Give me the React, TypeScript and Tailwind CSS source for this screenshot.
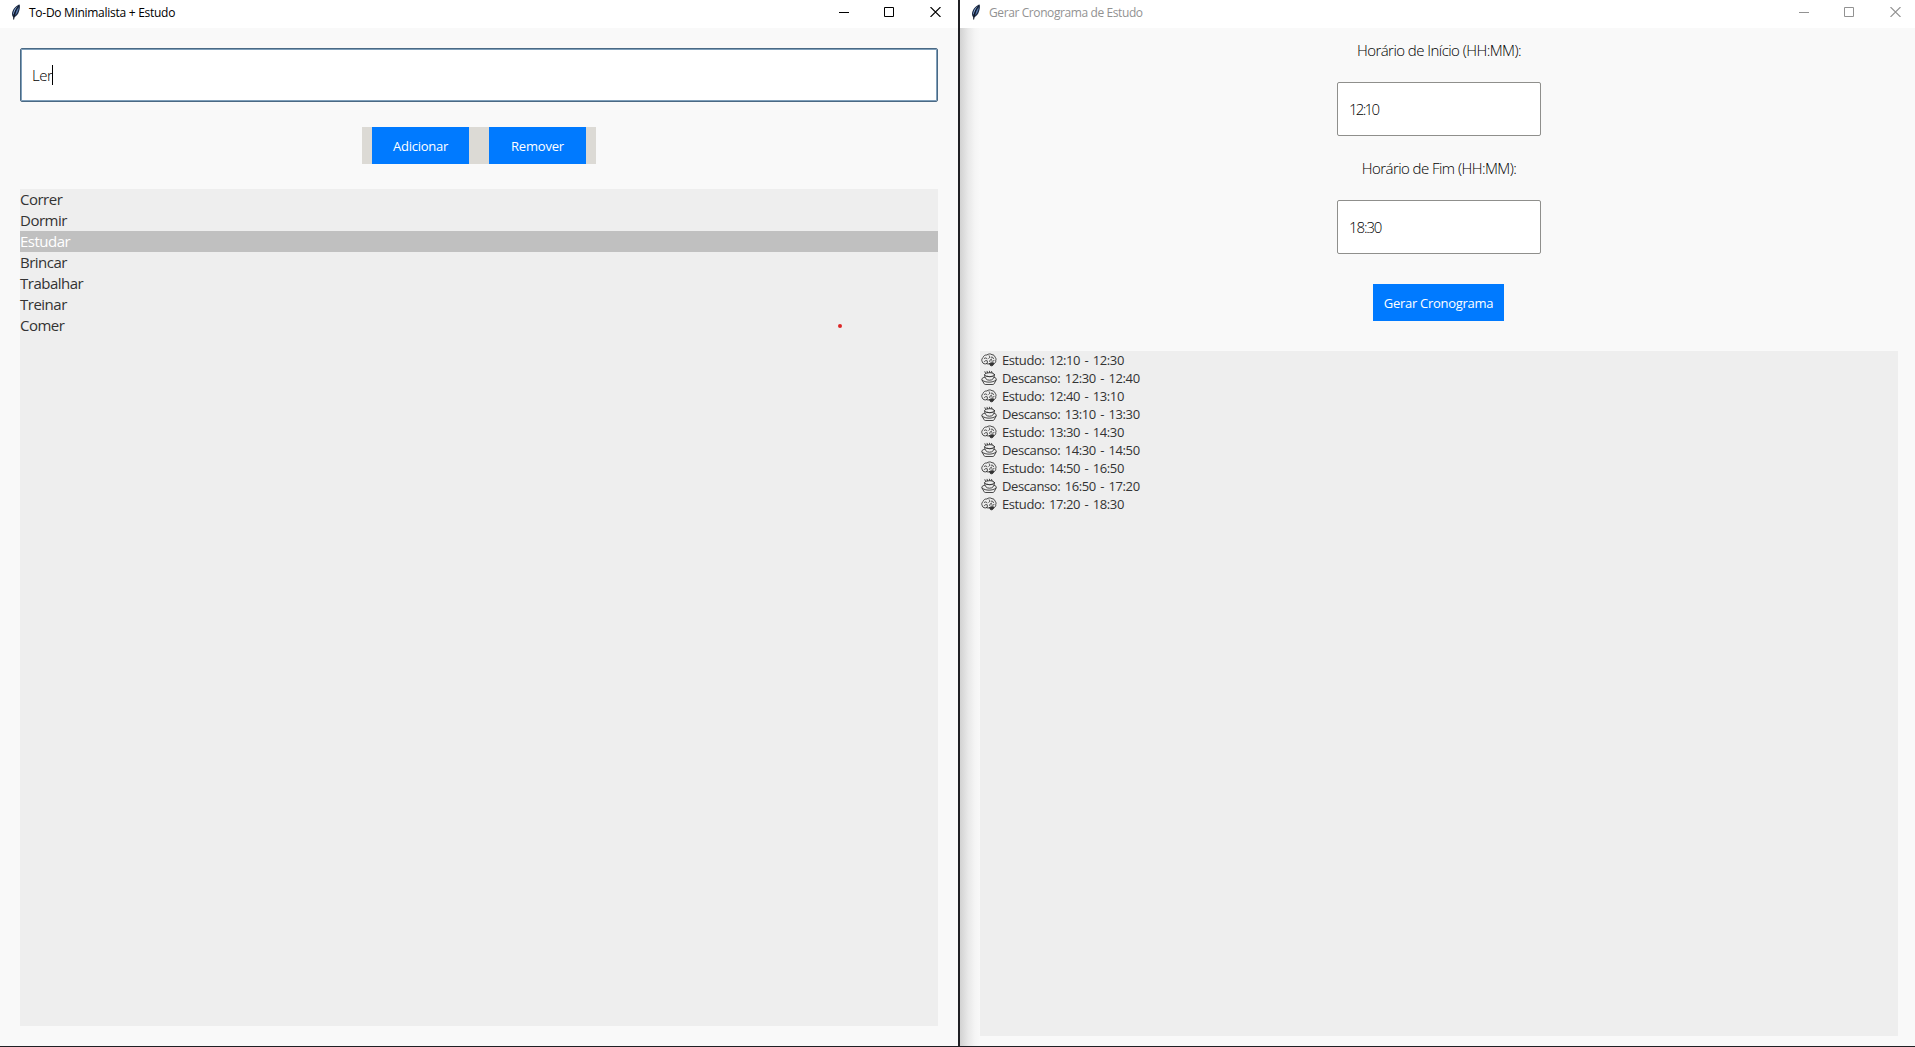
import React from "react";

const tasks = ["Correr", "Dormir", "Estudar", "Brincar", "Trabalhar", "Treinar", "Comer"];
const selectedTask = "Estudar";

const schedule = [
  { kind: "Estudo", span: "12:10 - 12:30" },
  { kind: "Descanso", span: "12:30 - 12:40" },
  { kind: "Estudo", span: "12:40 - 13:10" },
  { kind: "Descanso", span: "13:10 - 13:30" },
  { kind: "Estudo", span: "13:30 - 14:30" },
  { kind: "Descanso", span: "14:30 - 14:50" },
  { kind: "Estudo", span: "14:50 - 16:50" },
  { kind: "Descanso", span: "16:50 - 17:20" },
  { kind: "Estudo", span: "17:20 - 18:30" },
];

function Feather() {
  return (
    <svg width="10" height="17" viewBox="0 0 10 17" className="shrink-0">
      <path d="M8.600.4C5.800 1 2.200 4.400 1.200 8.200c-.5 2 0 4 1 5L2.600 16l.8-2.800c2-.6 3.800-3 4.600-5.600C8.800 5.200 9.300 2.500 8.600.4z" fill="#1c2b45" />
      <path d="M7.200 2C5 3.200 2.600 6 2.200 9.200l.4 1.600C3.400 7.400 5 4.400 7.200 2z" fill="#8fb4e4" />
      <path d="M7.700 3.200C7.600 5.600 6.400 9.400 4.200 11.200 4.600 8.400 5.800 5.400 7.700 3.200z" fill="#5679ad" />
      <path d="M7.800 1.600C5.200 4.600 3.400 8.400 2.700 15.500" fill="none" stroke="#0b0f1c" strokeWidth=".8" />
    </svg>
  );
}

function Brain() {
  return (
    <svg width="16" height="14" viewBox="0 0 16 14" fill="none" stroke="#333" strokeWidth=".9" strokeLinecap="round" className="shrink-0">
      <path d="M5.800 10.600C4 11.500 1.600 10.700 1.300 8.800.3 7.300.8 5.300 2.100 4.500 2.500 2.700 4.300 1.700 5.900 2 7.300.7 9.700.6 11 1.700c1.600 0 2.800 1 2.900 2.300 1.100.9 1.500 2.500.8 3.700.3 1.400-.5 2.700-1.900 2.900" />
      <path d="M5.800 10.600c.9-.8 1-1.900.3-2.700M5.800 10.600c.8.600 1.800.6 2.600.1M3.200 5.500c.9-1 2.500-.8 2.800.3M3.400 8.500c.6-.9 1.600-1.200 2.700-.6M8.300 2.800c.7.900.5 1.900-.4 2.600M10.200 4.200c1.200-.5 2.200.2 2.200 1.400M8.700 8.500c0-1.400.7-2.200 1.900-2.300M10.600 8c1.100.5 2.200.2 2.600-.7" />
      <path d="M8.600 10.400c1.200-.9 3.300-1 4.400-.2-.2 1.600-1.500 2.700-2.700 2.600-1 0-1.600-1.100-1.700-2.400z" fill="#333" />
    </svg>
  );
}

function Cup() {
  return (
    <svg width="16" height="16" viewBox="0 0 16 16" fill="none" stroke="#333" strokeWidth=".9" strokeLinecap="round" className="shrink-0">
      <ellipse cx="8.500" cy="4.700" rx="4.900" ry="2" />
      <path d="M4.500 3.200l-.6-1.500M6.500 2.700l-.4-1.400M8.800 2.600l-.3-1.400M11 2.900l-.4-1.400" />
      <path d="M3.600 4.900c.1 3.200 1.500 5.300 4.900 5.300s4.800-2.100 4.900-5.300M6 6.200c1.600.6 3.700.6 5.200 0" />
      <path d="M3.500 7.300C.9 7.800.6 9 .9 9.900l2.300 3.900c.2.500.6.700 1.100.7h7.600c.5 0 .9-.2 1.200-.7l2.100-3.900c.4-1.200-.4-2.200-1.900-2.600" />
      <path d="M1.200 10.200c3.300 2.700 10.400 2.700 13.700 0" />
    </svg>
  );
}

function TitleBar({ title, active }: { title: string; active: boolean }) {
  return (
    <header className={`flex h-7 shrink-0 items-start bg-white ${active ? "text-black" : "text-[#929292]"}`}>
      <div className="flex pt-1 pl-[11px]">
        <Feather />
        <h1 className={`ml-2 text-[12px] leading-[18px] whitespace-nowrap ${active ? "font-[Open_Sans] tracking-[-0.27px]" : "font-[Open_Sans] tracking-[-0.4px]"}`}>{title}</h1>
      </div>
      <div className={`ml-auto flex gap-[35px] pt-[7px] ${active ? "pr-[17px]" : "pr-[14px]"}`}>
        <svg width="10" height="10" viewBox="0 0 10 10"><path d="M0 5.500h10" stroke="currentColor" /></svg>
        <svg width="10" height="10" viewBox="0 0 10 10"><path d="M.5.5h9v9h-9z" fill="none" stroke="currentColor" /></svg>
        <svg width="11" height="10" viewBox="0 0 11 10" className="ml-px"><path d="M.5 0l10 10M10.500 0l-10 10" stroke="currentColor" strokeWidth="1.100" /></svg>
      </div>
    </header>
  );
}

function Button({ label, className }: { label: string; className: string }) {
  return (
    <button className={`flex h-[37px] items-center justify-center bg-[#007aff] pt-0.5 text-[13px] whitespace-nowrap text-white ${className}`}>
      {label}
    </button>
  );
}

function TimeField({ value, className }: { value: string; className: string }) {
  return (
    <div className={`flex h-[54px] w-[204px] items-center rounded-[2px] border border-[#8f8f8c] bg-white pl-[11px] font-[Open_Sans] text-[15px] font-light text-black ${className}`}>
      {value}
    </div>
  );
}

export default function App() {
  return (
    <div className="flex h-[1047px] w-[1915px] overflow-hidden border-b border-[#202024] bg-[#f9f9f9] font-['Open_Sans','Noto_Sans',sans-serif]">
      <section className="flex w-[958px] shrink-0 flex-col">
        <TitleBar title="To-Do Minimalista + Estudo" active />
        <main className="flex flex-1 flex-col px-5 pt-5 pb-5">
          <div className="flex h-[54px] items-center rounded-[2px] border border-[#4a6984] bg-white pl-[11px] shadow-[inset_0_0_0_1px_#7f9fba]">
            <span className="font-light text-[15px] tracking-[-0.5px] text-black">Ler</span>
            <span className="h-5 w-px bg-black" />
          </div>
          <div className="mt-[25px] flex w-[234px] gap-5 self-center bg-[#dcdad5] px-2.5">
            <Button label="Adicionar" className="w-[97px] tracking-[-0.25px]" />
            <Button label="Remover" className="w-[97px] tracking-[-0.2px]" />
          </div>
          <ul className="mt-[25px] flex-1 bg-[#eee] text-[15px] leading-[21px] tracking-[-0.5px] text-[#333]">
            {tasks.map((task) => (
              <li key={task} className={`h-[21px] ${task === selectedTask ? "bg-[#c0c0c0] text-white" : ""}`}>
                {task}
              </li>
            ))}
          </ul>
        </main>
      </section>
      <div className="w-0.5 shrink-0 bg-[#202024]" />
      <section className="flex flex-1 flex-col">
        <TitleBar title="Gerar Cronograma de Estudo" active={false} />
        <main className="flex flex-1 flex-col items-center bg-[linear-gradient(to_right,#d2d2d2,#e8e8e8_8px,#f5f5f5_15px,#f9f9f9_20px)] pt-[11px] pr-[17px] pb-2.5 pl-5">
          <label className="h-[22px] text-[15px] leading-[22px] font-light tracking-[-0.55px] text-black">Horário de Início (HH:MM):</label>
          <TimeField value="12:10" className="mt-[21px] tracking-[-1.7px]" />
          <label className="mt-[21px] h-[22px] text-[15px] leading-[22px] font-light tracking-[-0.55px] text-black">Horário de Fim (HH:MM):</label>
          <TimeField value="18:30" className="mt-[21px] tracking-[-1.1px]" />
          <Button label="Gerar Cronograma" className="mt-[30px] mr-px w-[131px] tracking-[-0.28px]" />
          <ul className="mt-[30px] flex-1 self-stretch bg-[#eee] text-[13px] leading-[18px] text-[#333]">
            {schedule.map(({ kind, span }) => (
              <li key={span} className="flex h-[18px] items-center pl-px">
                {kind === "Estudo" ? <Brain /> : <Cup />}
                <span className="ml-[5px] tracking-[-0.4px] [word-spacing:1.5px] whitespace-pre">{`${kind}: ${span}`}</span>
              </li>
            ))}
          </ul>
        </main>
      </section>
      <div className="absolute top-[324px] left-[838px] size-1 rounded-full bg-[#dc2626]" />
    </div>
  );
}
